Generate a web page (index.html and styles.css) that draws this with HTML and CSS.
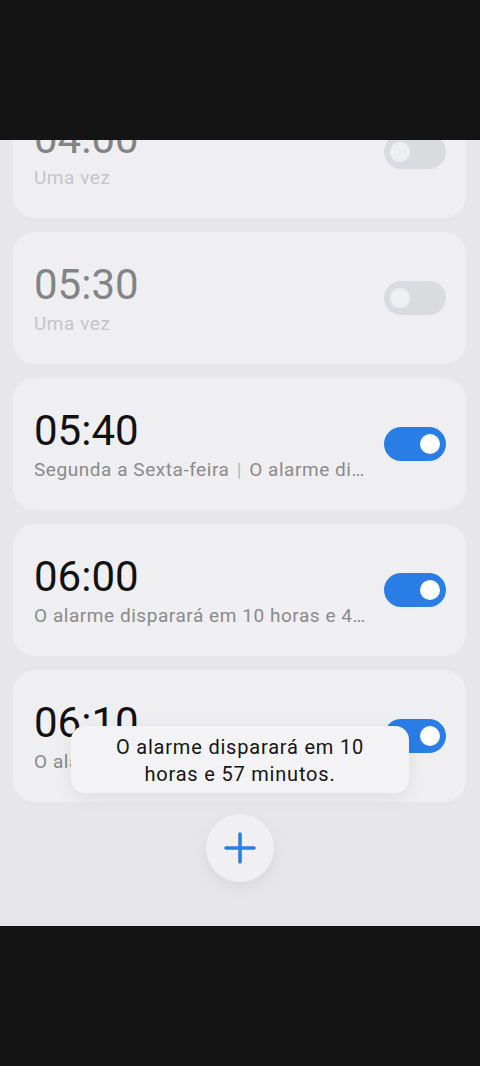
FILE: index.html
```html
<!DOCTYPE html>
<html lang="pt">
<head>
  <meta charset="UTF-8" />
  <title>Alarmes</title>
  <meta name="viewport" content="width=device-width, initial-scale=1.0"/>
  <link rel="stylesheet" href="styles.css">
</head>
<body>

<div class="screen">
  <div class="list">
    <div class="card off">
      <div class="info">
        <div class="time">04:00</div>
        <div class="desc">Uma vez</div>
      </div>
      <span class="toggle"></span>
    </div>

    <div class="card off">
      <div class="info">
        <div class="time">05:30</div>
        <div class="desc">Uma vez</div>
      </div>
      <span class="toggle"></span>
    </div>

    <div class="card">
      <div class="info">
        <div class="time">05:40</div>
        <div class="desc">Segunda a Sexta-feira <span class="sep">|</span> O alarme disparará em 10 horas e 27 minutos</div>
      </div>
      <span class="toggle on"></span>
    </div>

    <div class="card">
      <div class="info">
        <div class="time">06:00</div>
        <div class="desc">O alarme disparará em 10 horas e 47 minutos</div>
      </div>
      <span class="toggle on"></span>
    </div>

    <div class="card">
      <div class="info">
        <div class="time">06:10</div>
        <div class="desc">O alarme disparará em 10 horas e 57 minutos</div>
      </div>
      <span class="toggle on"></span>
    </div>

    <button class="fab" aria-label="Adicionar alarme">
      <svg width="32" height="32" viewBox="0 0 32 32">
        <path d="M16 2v28M2 16h28" stroke="#2d7ee6" stroke-width="3.6" stroke-linecap="round" fill="none"/>
      </svg>
    </button>
  </div>

  <div class="toast">O alarme disparará em 10<br>horas e 57 minutos.</div>
</div>

</body>
</html>
```

FILE: styles.css
```css
body { margin: 0; background: #141414; font-family: Roboto, "Noto Sans", sans-serif; }
.screen {
  position: relative;
  margin-top: 140px;
  height: 786px;
  overflow: hidden;
  background: #e7e7e9;
}
.list {
  display: flex;
  flex-direction: column;
  gap: 14px;
  margin-top: -54px;
  padding: 0 14px 0 13px;
}
.card {
  height: 132px;
  box-sizing: border-box;
  padding: 0 20px 0 21px;
  display: flex;
  align-items: center;
  justify-content: space-between;
  background: #efeff1;
  border-radius: 22px;
}
.info { width: 338px; overflow: hidden; }
.time { font-size: 42px; line-height: 48px; color: #111; }
.desc {
  font-size: 19px;
  letter-spacing: 0.55px;
  line-height: 24px;
  margin-top: 3px;
  color: #8a8a8c;
  white-space: nowrap;
  overflow: hidden;
  text-overflow: ellipsis;
}
.sep { color: #b4b4b6; margin: 0 2px; }
.off .time { color: #828486; }
.off .desc { color: #c4c5c7; }

.toggle {
  position: relative;
  width: 62px;
  height: 34px;
  border-radius: 17px;
  background: #dadbde;
}
.toggle:after {
  content: "";
  position: absolute;
  top: 7px;
  left: 6px;
  width: 20px;
  height: 20px;
  border-radius: 50%;
  background: #eeeff1;
}
.toggle.on { background: #2b7de6; }
.toggle.on:after { left: auto; right: 6px; background: #fff; }

.fab {
  align-self: center;
  margin-top: -2px;
  width: 68px;
  height: 68px;
  border: none;
  border-radius: 50%;
  background: #f0f0f2;
  box-shadow: 0 5px 16px rgba(0, 0, 0, 0.07);
  display: flex;
  align-items: center;
  justify-content: center;
  padding: 0;
}

.toast {
  position: absolute;
  left: 71px;
  top: 586px;
  width: 338px;
  height: 67px;
  box-sizing: border-box;
  padding-top: 8px;
  background: #f3f3f5;
  border-radius: 14px;
  box-shadow: 0 4px 18px rgba(0, 0, 0, 0.08);
  text-align: center;
  font-size: 20px;
  letter-spacing: 0.8px;
  line-height: 27px;
  color: #151515;
}
```
